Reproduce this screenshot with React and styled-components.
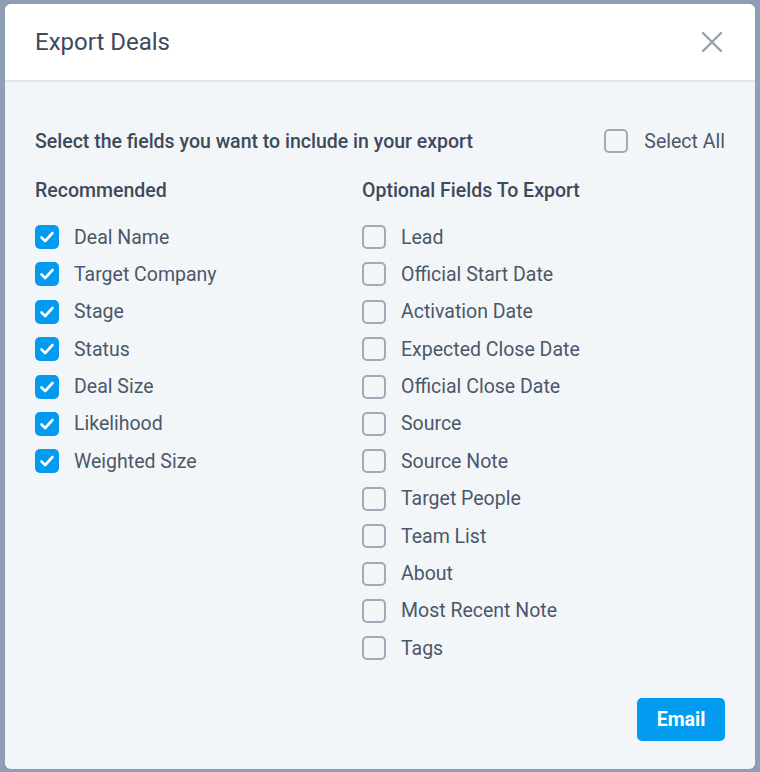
import React, { useState } from "react";
import styled, { createGlobalStyle } from "styled-components";

const Global = createGlobalStyle`
  html, body {
    margin: 0;
    padding: 0;
    background: #8e9fb3;
    font-family: Roboto, "Liberation Sans", sans-serif;
  }
`;

const Page = styled.div`
  width: 760px;
  height: 772px;
  padding: 4px 5px 3px 5px;
  box-sizing: border-box;
`;

const Modal = styled.div`
  width: 750px;
  height: 765px;
  background: #f3f6f9;
  border-radius: 6px;
  overflow: hidden;
  display: flex;
  flex-direction: column;
`;

const Header = styled.div`
  height: 76px;
  background: #fff;
  border-bottom: 2px solid #dfe3e8;
  display: flex;
  align-items: center;
  justify-content: space-between;
  padding: 0 30px;
  flex-shrink: 0;
`;

const Title = styled.h2`
  margin: 0;
  font-size: 24px;
  font-weight: 400;
  color: #3d4a5c;
`;

const Close = styled.button`
  border: none;
  background: none;
  padding: 0;
  width: 24px;
  height: 24px;
  margin-right: 1px;
  cursor: pointer;
  display: flex;
  align-items: center;
  justify-content: center;
`;

const Body = styled.div`
  flex: 1;
  display: flex;
  flex-direction: column;
  padding: 47px 30px 28px 30px;
`;

const TopRow = styled.div`
  display: flex;
  align-items: center;
  justify-content: space-between;
  height: 24px;
`;

const Lead = styled.div`
  font-size: 19.5px;
  font-weight: 500;
  color: #3d4a5c;
`;

const Columns = styled.div`
  display: grid;
  grid-template-columns: 327px 1fr;
  margin-top: 25px;
`;

const Column = styled.div`
  display: flex;
  flex-direction: column;
`;

const Heading = styled.div`
  font-size: 19.5px;
  font-weight: 500;
  color: #3d4a5c;
  height: 24px;
  line-height: 24px;
  margin-bottom: 22px;
  margin-top: 1px;
`;

const List = styled.div`
  display: flex;
  flex-direction: column;
  gap: 13.4px;
`;

const Row = styled.label`
  display: flex;
  align-items: center;
  gap: ${(p) => (p.wide ? "16px" : "15px")};
  height: 24px;
  cursor: pointer;
  font-size: 19.5px;
  color: #4b586a;
`;

const Box = styled.span`
  width: 24px;
  height: 24px;
  box-sizing: border-box;
  border-radius: 5px;
  flex-shrink: 0;
  display: flex;
  align-items: center;
  justify-content: center;
  background: ${(p) => (p.checked ? "#039bf0" : "transparent")};
  border: ${(p) => (p.checked ? "none" : "2px solid #9dabbb")};
`;

const Footer = styled.div`
  margin-top: auto;
  display: flex;
  justify-content: flex-end;
`;

const EmailButton = styled.button`
  width: 88px;
  height: 43px;
  border: none;
  border-radius: 5px;
  background: #039bf0;
  color: #fff;
  font-family: Roboto, "Liberation Sans", sans-serif;
  font-size: 19.5px;
  font-weight: 700;
  cursor: pointer;
`;

const Check = ({ checked, label, onClick, wide }) => (
  <Row onClick={onClick} wide={wide}>
    <Box checked={checked}>
      {checked && (
        <svg width="16" height="16" viewBox="0 0 16 16">
          <path
            d="M2.5 8.5 L6.2 12 L13.5 4"
            fill="none"
            stroke="#fff"
            strokeWidth="2.6"
            strokeLinecap="round"
            strokeLinejoin="round"
          />
        </svg>
      )}
    </Box>
    {label}
  </Row>
);

const recommended = [
  "Deal Name",
  "Target Company",
  "Stage",
  "Status",
  "Deal Size",
  "Likelihood",
  "Weighted Size",
];

const optional = [
  "Lead",
  "Official Start Date",
  "Activation Date",
  "Expected Close Date",
  "Official Close Date",
  "Source",
  "Source Note",
  "Target People",
  "Team List",
  "About",
  "Most Recent Note",
  "Tags",
];

export default function App() {
  const [rec, setRec] = useState(recommended.map(() => true));
  const [opt, setOpt] = useState(optional.map(() => false));
  const all = opt.every(Boolean) && rec.every(Boolean);

  const toggleAll = () => {
    setRec(recommended.map(() => !all));
    setOpt(optional.map(() => !all));
  };

  return (
    <Page>
      <Global />
      <Modal>
        <Header>
          <Title>Export Deals</Title>
          <Close aria-label="Close">
            <svg width="20" height="20" viewBox="0 0 20 20">
              <path
                d="M1 1 L19 19 M19 1 L1 19"
                stroke="#94a2b3"
                strokeWidth="2.4"
                strokeLinecap="round"
              />
            </svg>
          </Close>
        </Header>
        <Body>
          <TopRow>
            <Lead>Select the fields you want to include in your export</Lead>
            <Check checked={all} label="Select All" onClick={toggleAll} wide />
          </TopRow>
          <Columns>
            <Column>
              <Heading>Recommended</Heading>
              <List>
                {recommended.map((l, i) => (
                  <Check
                    key={l}
                    label={l}
                    checked={rec[i]}
                    onClick={() => setRec(rec.map((v, j) => (j === i ? !v : v)))}
                  />
                ))}
              </List>
            </Column>
            <Column>
              <Heading>Optional Fields To Export</Heading>
              <List>
                {optional.map((l, i) => (
                  <Check
                    key={l}
                    label={l}
                    checked={opt[i]}
                    onClick={() => setOpt(opt.map((v, j) => (j === i ? !v : v)))}
                  />
                ))}
              </List>
            </Column>
          </Columns>
          <Footer>
            <EmailButton>Email</EmailButton>
          </Footer>
        </Body>
      </Modal>
    </Page>
  );
}
